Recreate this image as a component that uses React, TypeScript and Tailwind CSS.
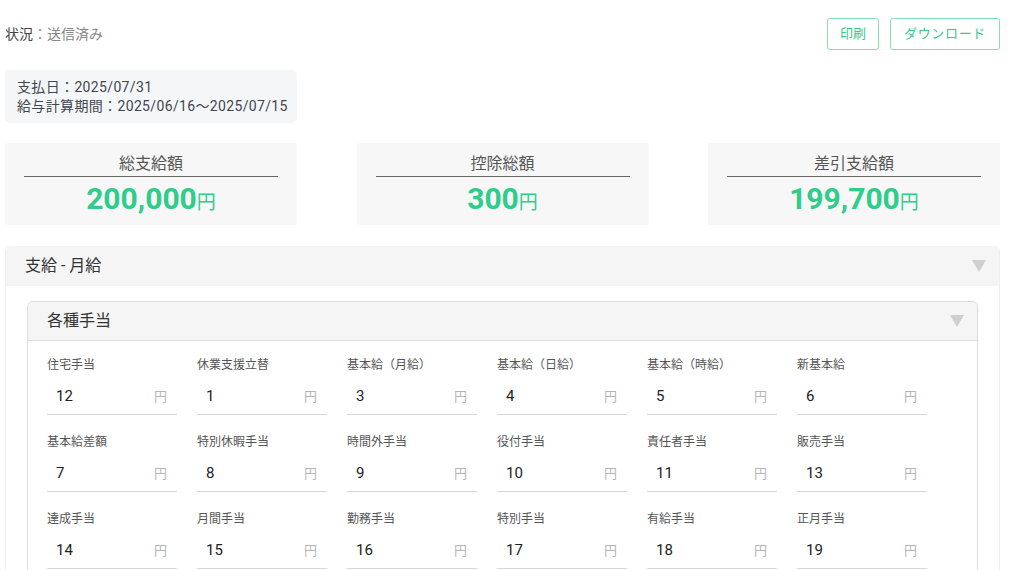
import React from "react";

type Allowance = { label: string; value: string };

const totals = [
  { label: "総支給額", value: "200,000" },
  { label: "控除総額", value: "300" },
  { label: "差引支給額", value: "199,700" },
];

const allowances: Allowance[] = [
  { label: "住宅手当", value: "12" },
  { label: "休業支援立替", value: "1" },
  { label: "基本給（月給）", value: "3" },
  { label: "基本給（日給）", value: "4" },
  { label: "基本給（時給）", value: "5" },
  { label: "新基本給", value: "6" },
  { label: "基本給差額", value: "7" },
  { label: "特別休暇手当", value: "8" },
  { label: "時間外手当", value: "9" },
  { label: "役付手当", value: "10" },
  { label: "責任者手当", value: "11" },
  { label: "販売手当", value: "13" },
  { label: "達成手当", value: "14" },
  { label: "月間手当", value: "15" },
  { label: "勤務手当", value: "16" },
  { label: "特別手当", value: "17" },
  { label: "有給手当", value: "18" },
  { label: "正月手当", value: "19" },
];

function Caret() {
  return (
    <svg width="14" height="12" viewBox="0 0 14 12" className="text-[#cfcfcf]">
      <path d="M0 0h14L7 12z" fill="currentColor" />
    </svg>
  );
}

function YenField({ label, value }: Allowance) {
  return (
    <div className="w-[130px]">
      <div className="text-[12px] leading-[18px] text-[#555]">{label}</div>
      <div className="mt-[5px] flex h-[36px] items-center justify-between border-b border-[#d6d6d6] pl-[9px] pr-[10px]">
        <span className="text-[15px] text-[#222]">{value}</span>
        <span className="text-[13px] text-[#b5b5b5]">円</span>
      </div>
    </div>
  );
}

export default function App() {
  return (
    <div
      className="h-[570px] overflow-hidden bg-white pl-[5px] pr-[12px]"
      style={{ fontFamily: "Roboto, 'Noto Sans CJK JP', sans-serif" }}
    >
      {/* Status + actions */}
      <div className="flex items-start justify-between pt-[18px]">
        <div className="pt-[6px] text-[14px]">
          <span className="text-[#444]">状況</span>
          <span className="text-[#888]">：送信済み</span>
        </div>
        <div className="flex gap-[11px]">
          <button className="h-[32px] w-[52px] rounded-[3px] border border-[#7fe0b4] text-[13px] text-[#37c98c]">
            印刷
          </button>
          <button className="h-[32px] w-[110px] rounded-[3px] border border-[#7fe0b4] text-[13px] tracking-wider text-[#37c98c]">
            ダウンロード
          </button>
        </div>
      </div>

      {/* Pay dates */}
      <div className="mt-[20px] w-[292px] rounded-[5px] bg-[#f5f6f7] pl-[12px] pt-[8px] pb-[7px] text-[14px] leading-[19px] tracking-wide text-[#3f4650]">
        <div>支払日：2025/07/31</div>
        <div>給与計算期間：2025/06/16〜2025/07/15</div>
      </div>

      {/* Totals */}
      <div className="mt-[20px] flex justify-between">
        {totals.map((t) => (
          <div key={t.label} className="h-[82px] w-[292px] bg-[#f7f7f7] px-[19px] pt-[10px]">
            <div className="border-b border-[#666] pb-[2px] text-center text-[16px] leading-[21px] text-[#555]">
              {t.label}
            </div>
            <div className="mt-[2px] text-center font-bold leading-[40px] text-[#2fcc8b]">
              <span className="text-[30px]">{t.value}</span>
              <span className="text-[19px] font-normal">円</span>
            </div>
          </div>
        ))}
      </div>

      {/* 支給 - 月給 */}
      <div className="mt-[21px] rounded-t-[5px] border-x border-[#f3eded]">
        <div className="flex h-[40px] items-center justify-between rounded-t-[5px] bg-[#f5f5f5] pl-[19px] pr-[13px]">
          <span className="text-[16px] text-[#333]">支給 - 月給</span>
          <Caret />
        </div>
        <div className="px-[21px] pt-[15px]">
          <div className="rounded-t-[6px] border border-[#dcdcdc]">
            <div className="flex h-[39px] items-center justify-between rounded-t-[6px] border-b border-[#dcdcdc] bg-[#f5f5f5] pl-[19px] pr-[13px]">
              <span className="text-[16px] text-[#333]">各種手当</span>
              <Caret />
            </div>
            <div className="grid grid-cols-[repeat(6,130px)] gap-x-[20px] gap-y-[18px] px-[19px] pt-[15px] pb-[20px]">
              {allowances.map((a) => (
                <YenField key={a.label} {...a} />
              ))}
            </div>
          </div>
        </div>
      </div>
    </div>
  );
}
